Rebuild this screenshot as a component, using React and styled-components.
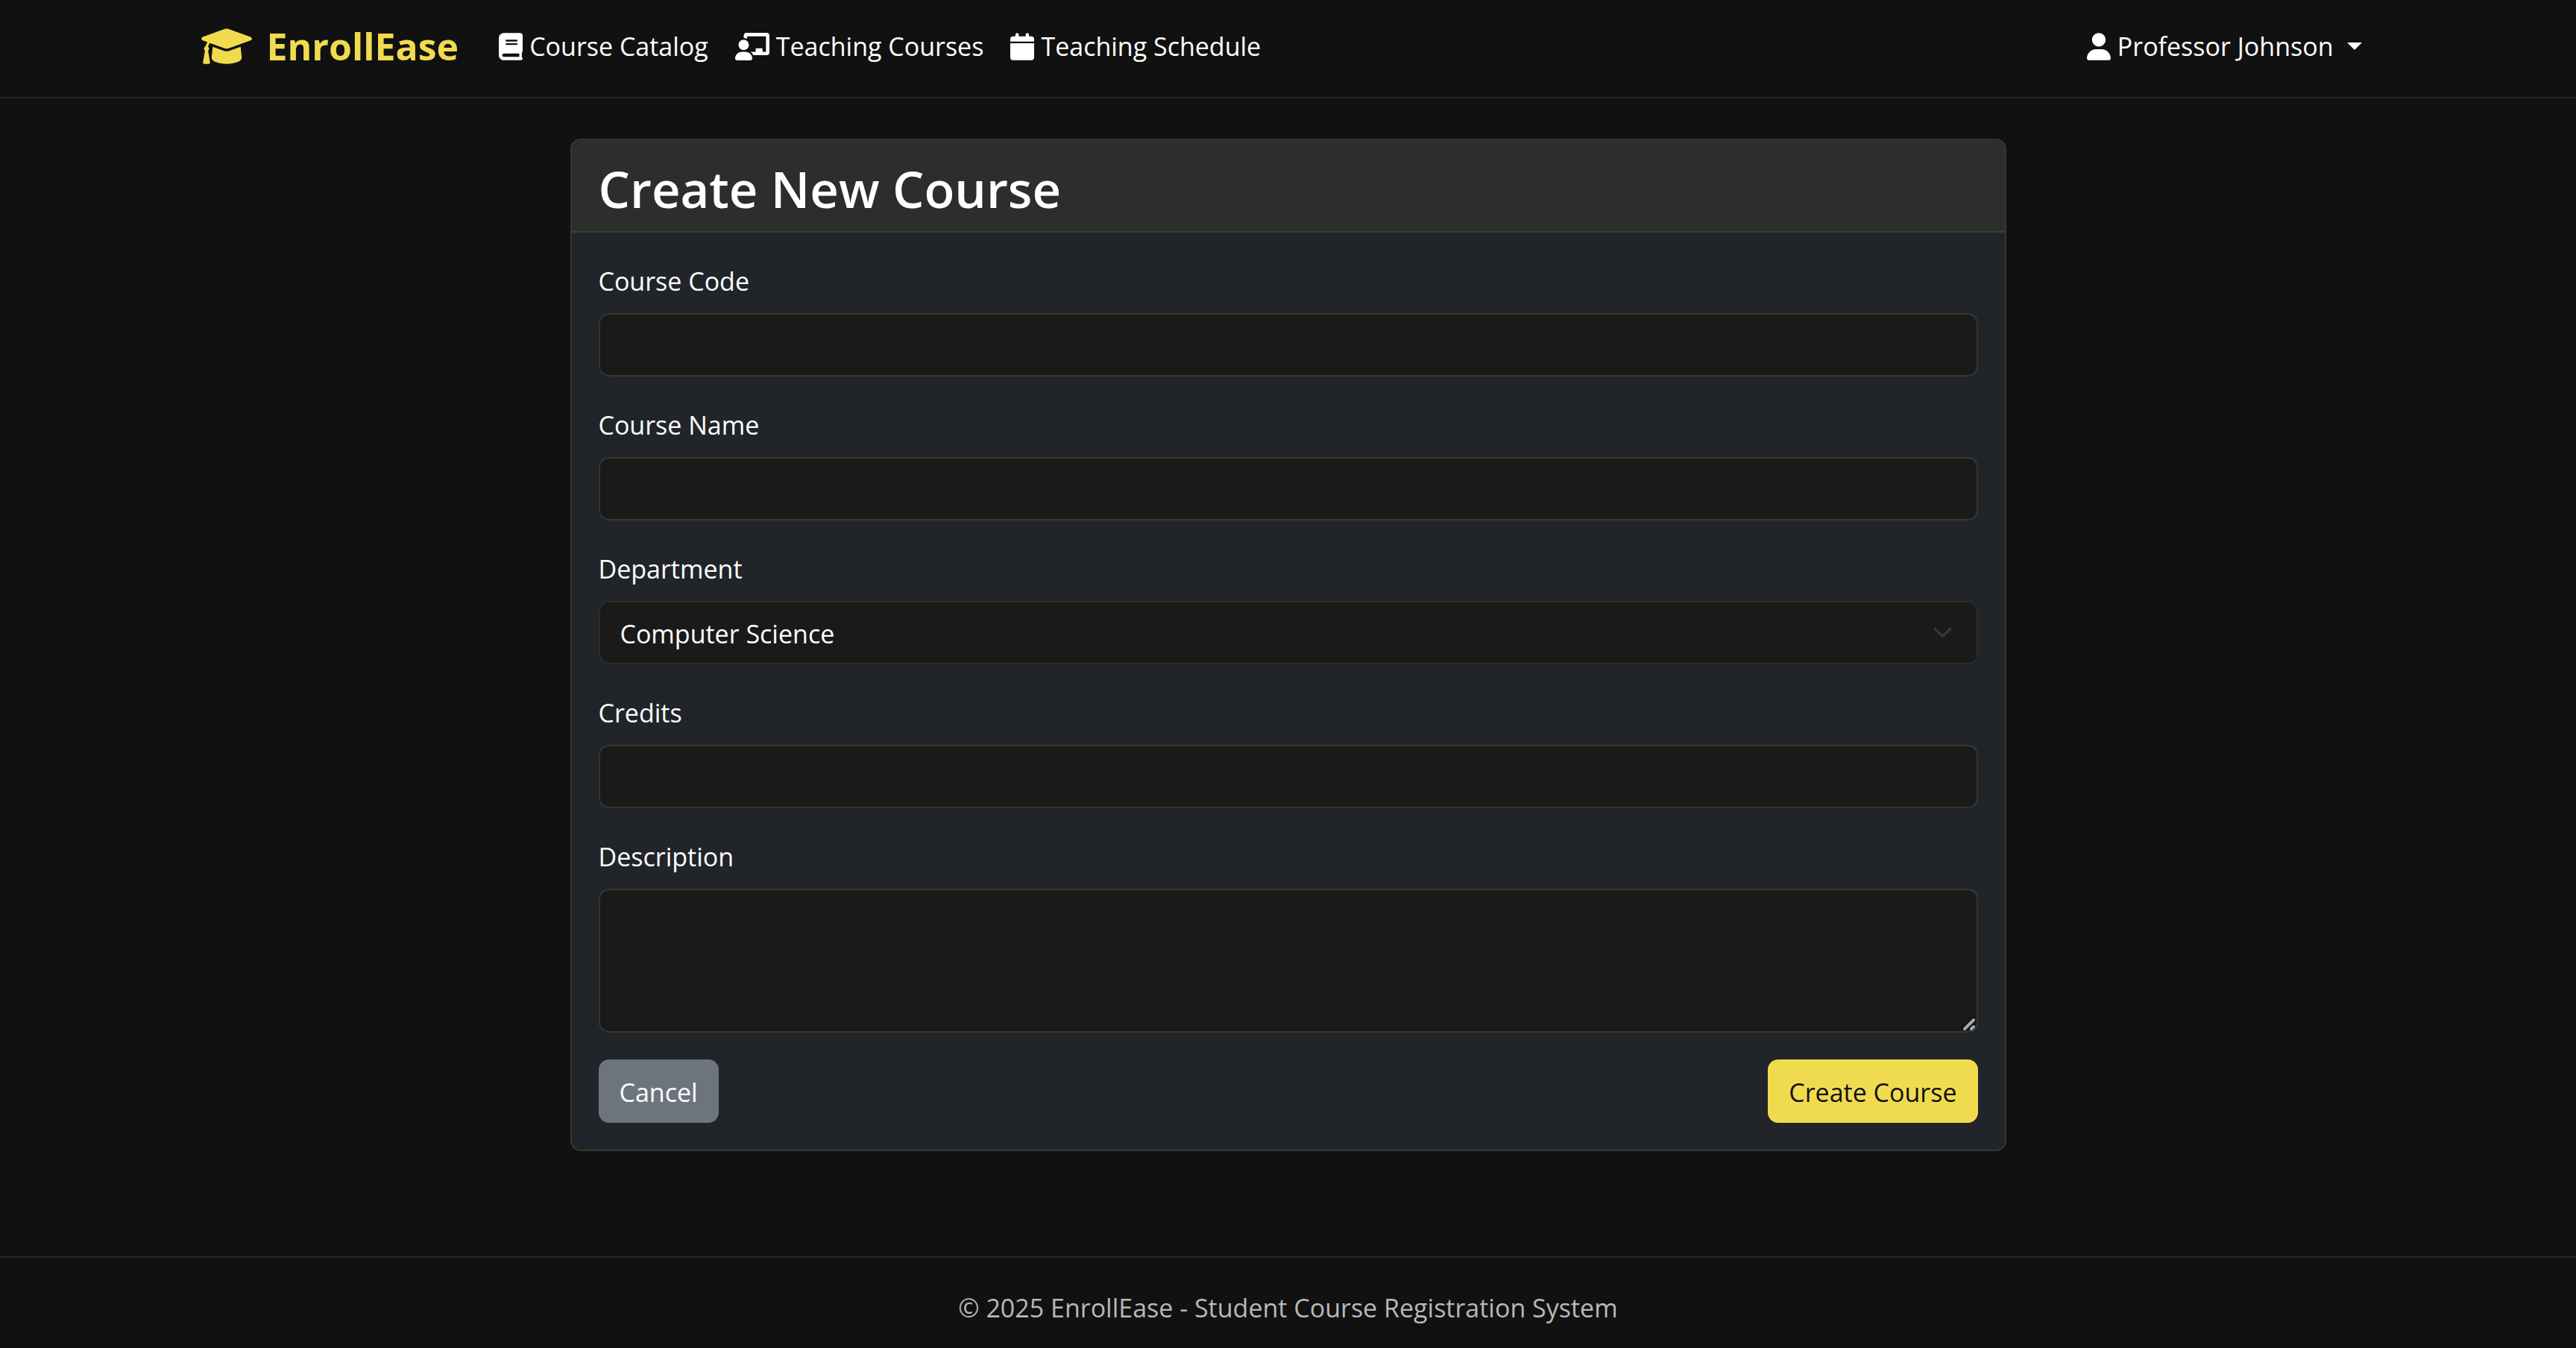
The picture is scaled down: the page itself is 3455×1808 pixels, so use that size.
import React from "react";
import styled, { createGlobalStyle } from "styled-components";

const line = "rgba(240, 219, 79, 0.1)";
const gold = "#f0db4f";

const GlobalStyle = createGlobalStyle`
  *, *::before, *::after { box-sizing: border-box; }
  body {
    margin: 0;
    background: #111111;
    color: #ffffff;
    font-family: "Open Sans", "Noto Sans", sans-serif;
    font-size: 34px;
    line-height: 54px;
  }
`;

const Page = styled.div`
  min-height: 100vh;
  display: flex;
  flex-direction: column;
`;

const Header = styled.header`
  border-bottom: 2px solid ${line};
`;

const NavRow = styled.div`
  display: flex;
  align-items: center;
  width: 100%;
  max-width: 2970px;
  height: 130px;
  margin: 0 auto;
  padding: 0 27px 6px;
`;

const Icon = styled.svg`
  flex: none;
  display: block;
  width: ${(p) => p.$width}px;
  height: ${(p) => p.$height}px;
  fill: currentColor;
`;

const Brand = styled.a`
  display: flex;
  align-items: center;
  gap: 20px;
  margin-right: 36px;
  color: ${gold};
  font-size: 50px;
  font-weight: 700;
  text-decoration: none;
`;

const NavLinks = styled.nav`
  display: flex;
  flex: 1;
`;

const NavLink = styled.a`
  display: flex;
  align-items: center;
  gap: 9px;
  padding: 0 18px;
  color: #ffffff;
  text-decoration: none;
`;

const UserMenu = styled.button`
  display: flex;
  align-items: center;
  gap: 9px;
  padding: 0 18px;
  border: 0;
  background: none;
  color: #ffffff;
  font: inherit;
  cursor: pointer;
`;

const Caret = styled.span`
  margin-left: 9px;
  border-top: 10px solid #ffffff;
  border-left: 10px solid transparent;
  border-right: 10px solid transparent;
`;

const Main = styled.main`
  flex: 1;
  padding: 54px 0;
`;

const Card = styled.section`
  width: calc(min(100%, 2970px) * 2 / 3 - 54px);
  margin: 0 auto;
  border: 2px solid ${line};
  border-radius: 14px;
  background: #212529;
  overflow: hidden;
`;

const CardHeader = styled.div`
  padding: 22px 36px 14px;
  border-bottom: 2px solid ${line};
  background: rgba(240, 219, 79, 0.05);
`;

const Title = styled.h2`
  margin: 0;
  font-size: 67px;
  font-weight: 600;
  line-height: 86px;
`;

const Form = styled.form`
  display: flex;
  flex-direction: column;
  gap: 36px;
  padding: 36px;
`;

const Field = styled.div`
  display: flex;
  flex-direction: column;
  gap: 16px;
`;

const Label = styled.label`
  align-self: flex-start;
  padding-top: 2px;
`;

const control = `
  display: block;
  width: 100%;
  padding: 2px 27px 0;
  border: 2px solid ${line};
  border-radius: 14px;
  background-color: #1a1a1a;
  color: #ffffff;
  font: inherit;
  outline: none;
`;

const Input = styled.input`
  ${control}
  height: 85px;
  background-clip: padding-box;
`;

const Select = styled.select`
  ${control}
  height: 85px;
  appearance: none;
`;

const TextArea = styled.textarea`
  ${control}
  height: 193px;
  padding: 14px 27px;
  background-clip: padding-box;
  resize: vertical;

  &::-webkit-resizer { background: transparent; }
`;

const ControlBox = styled.div`
  position: relative;
`;

const Chevron = styled.svg`
  position: absolute;
  right: 34px;
  top: 29px;
  width: 27px;
  height: 27px;
  pointer-events: none;
`;

const Grip = styled.svg`
  position: absolute;
  right: 2px;
  bottom: 2px;
  width: 20px;
  height: 20px;
  pointer-events: none;
`;

const Actions = styled.div`
  display: flex;
  justify-content: space-between;
`;

const Button = styled.button`
  height: 85px;
  padding: 2px 28px 0;
  border: 0;
  border-radius: 14px;
  background: ${(p) => (p.$primary ? gold : "#6c757d")};
  color: ${(p) => (p.$primary ? "#111111" : "#ffffff")};
  font: inherit;
  cursor: pointer;
`;

const Footer = styled.footer`
  padding: 40px 27px 27px;
  border-top: 2px solid ${line};
  color: #b8b8b8;
  text-align: center;
`;

function CapIcon() {
  return (
    <Icon $width={68} $height={54} viewBox="0 0 640 512" aria-hidden="true">
      <path d="M623.1 136.9l-282.7-101.2c-13.73-4.91-28.7-4.91-42.43 0L16.05 136.9C6.438 140.4 0 149.6 0 160s6.438 19.65 16.05 23.09L76.07 204.6c-11.89 15.8-20.26 34.16-24.55 53.95C40.05 263.4 32 274.8 32 288c0 9.953 4.814 18.49 11.94 24.36l-24.83 149C17.48 471.1 25 480 34.89 480H93.11c9.887 0 17.41-8.879 15.78-18.63l-24.83-149C91.19 306.5 96 297.1 96 288c0-10.29-5.174-19.03-12.72-24.89c4.252-17.76 12.88-33.82 24.94-47.03l190.6 68.23c13.73 4.91 28.7 4.91 42.43 0l282.7-101.2C633.6 179.6 640 170.4 640 160S633.6 140.4 623.1 136.9zM351.1 314.4C341.7 318.1 330.9 320 320 320c-10.92 0-21.69-1.867-32-5.555L142.8 262.5L128 405.3C128 446.6 213.1 480 320 480c105.1 0 192-33.4 192-74.67l-14.78-142.9L351.1 314.4z" />
    </Icon>
  );
}

function BookIcon() {
  return (
    <Icon $width={32} $height={37} viewBox="0 0 448 512" aria-hidden="true">
      <path d="M448 336v-288C448 21.49 426.5 0 400 0H96C42.98 0 0 42.98 0 96v320c0 53.02 42.98 96 96 96h320c17.67 0 32-14.33 32-31.1c0-11.72-6.607-21.52-16-27.1v-81.36C441.8 362.8 448 350.2 448 336zM143.1 128h192C344.8 128 352 135.2 352 144C352 152.8 344.8 160 336 160H143.1C135.2 160 128 152.8 128 144C128 135.2 135.2 128 143.1 128zM143.1 192h192C344.8 192 352 199.2 352 208C352 216.8 344.8 224 336 224H143.1C135.2 224 128 216.8 128 208C128 199.2 135.2 192 143.1 192zM384 448H96c-17.67 0-32-14.33-32-32c0-17.67 14.33-32 32-32h288V448z" />
    </Icon>
  );
}

function BoardIcon() {
  return (
    <Icon $width={46} $height={37} viewBox="0 0 640 512" aria-hidden="true">
      <path d="M592 0h-384C181.5 0 160 22.25 160 49.63V96c23.42 0 45.1 6.781 63.1 17.81V64h352v288h-64V304c0-8.838-7.164-16-16-16h-96c-8.836 0-16 7.162-16 16V352H287.3c22.07 16.48 39.54 38.5 50.76 64h253.9C618.5 416 640 393.8 640 366.4V49.63C640 22.25 618.5 0 592 0zM160 320c53.02 0 96-42.98 96-96c0-53.02-42.98-96-96-96C106.1 128 64 170.1 64 224C64 277 106.1 320 160 320zM192 352H128c-70.69 0-128 57.31-128 128c0 17.67 14.33 32 32 32h256c17.67 0 32-14.33 32-32C320 409.3 262.7 352 192 352z" />
    </Icon>
  );
}

function CalendarIcon() {
  return (
    <Icon $width={32} $height={37} viewBox="0 0 448 512" aria-hidden="true">
      <path d="M96 32C96 14.33 110.3 0 128 0C145.7 0 160 14.33 160 32V64H288V32C288 14.33 302.3 0 320 0C337.7 0 352 14.33 352 32V64H400C426.5 64 448 85.49 448 112V160H0V112C0 85.49 21.49 64 48 64H96V32zM448 464C448 490.5 426.5 512 400 512H48C21.49 512 0 490.5 0 464V192H448V464z" />
    </Icon>
  );
}

function UserIcon() {
  return (
    <Icon $width={32} $height={37} viewBox="0 0 448 512" aria-hidden="true">
      <path d="M224 256c70.7 0 128-57.31 128-128s-57.3-128-128-128C153.3 0 96 57.31 96 128S153.3 256 224 256zM274.7 304H173.3C77.61 304 0 381.6 0 477.3c0 19.14 15.52 34.67 34.66 34.67h378.7C432.5 512 448 496.5 448 477.3C448 381.6 370.4 304 274.7 304z" />
    </Icon>
  );
}

export default function App() {
  return (
    <Page>
      <GlobalStyle />
      <Header>
        <NavRow>
          <Brand href="#">
            <CapIcon />
            EnrollEase
          </Brand>
          <NavLinks>
            <NavLink href="#"><BookIcon />Course Catalog</NavLink>
            <NavLink href="#"><BoardIcon />Teaching Courses</NavLink>
            <NavLink href="#"><CalendarIcon />Teaching Schedule</NavLink>
          </NavLinks>
          <UserMenu type="button">
            <UserIcon />
            Professor Johnson
            <Caret />
          </UserMenu>
        </NavRow>
      </Header>

      <Main>
        <Card>
          <CardHeader>
            <Title>Create New Course</Title>
          </CardHeader>
          <Form onSubmit={(e) => e.preventDefault()}>
            <Field>
              <Label htmlFor="code">Course Code</Label>
              <Input id="code" type="text" />
            </Field>
            <Field>
              <Label htmlFor="name">Course Name</Label>
              <Input id="name" type="text" />
            </Field>
            <Field>
              <Label htmlFor="department">Department</Label>
              <ControlBox>
                <Select id="department" defaultValue="cs">
                  <option value="cs">Computer Science</option>
                </Select>
                <Chevron viewBox="0 0 16 16" fill="none" stroke="#36373d" strokeWidth="2" strokeLinecap="round" strokeLinejoin="round" aria-hidden="true">
                  <path d="m2 5 6 6 6-6" />
                </Chevron>
              </ControlBox>
            </Field>
            <Field>
              <Label htmlFor="credits">Credits</Label>
              <Input id="credits" type="text" inputMode="numeric" />
            </Field>
            <Field>
              <Label htmlFor="description">Description</Label>
              <ControlBox>
                <TextArea id="description" />
                <Grip viewBox="0 0 20 20" fill="none" strokeLinecap="round" aria-hidden="true">
                  <path d="M2 16 16 2M11 16l5-5" stroke="#0c0c0c" strokeWidth="3" />
                  <path d="M4 17 16 5M13 17l3-3" stroke="#a8a8a8" strokeWidth="4" />
                </Grip>
              </ControlBox>
            </Field>
            <Actions>
              <Button type="button">Cancel</Button>
              <Button type="submit" $primary>Create Course</Button>
            </Actions>
          </Form>
        </Card>
      </Main>

      <Footer>© 2025 EnrollEase - Student Course Registration System</Footer>
    </Page>
  );
}
